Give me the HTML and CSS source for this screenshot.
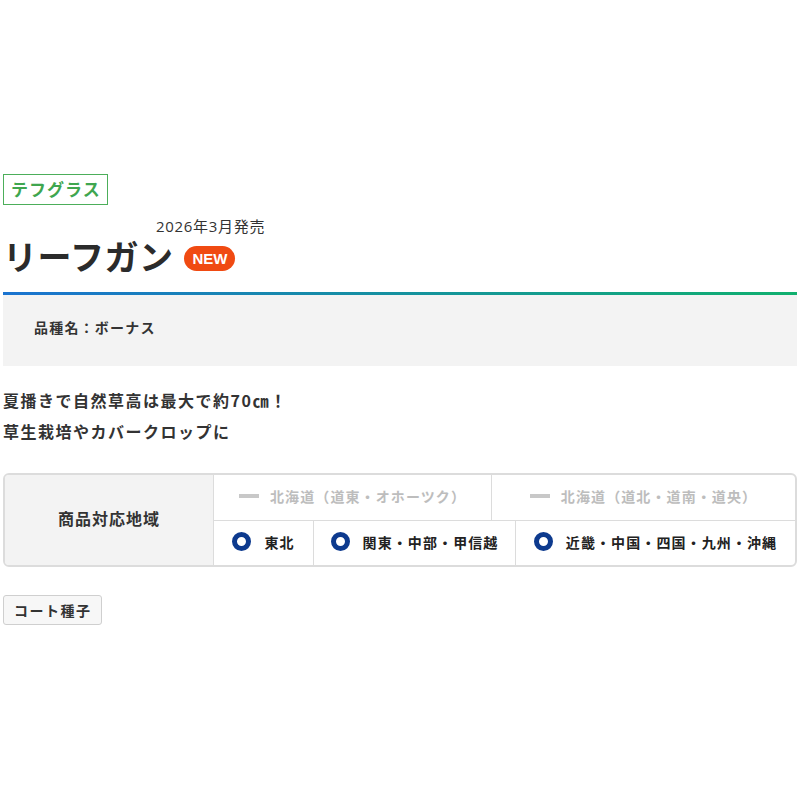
FILE: index.html
```html
<!DOCTYPE html>
<html lang="ja">
<head>
<meta charset="utf-8">
<link rel="stylesheet" href="styles.css">
</head>
<body>
<div class="wrap">
  <span class="tag">テフグラス</span>
  <div class="date">2026年3月発売</div>
  <div class="title-row">
    <h1 class="title">リーフガン</h1>
    <span class="badge">NEW</span>
  </div>
  <div class="rule"></div>
  <div class="variety">品種名：ボーナス</div>
  <p class="lead">夏播きで自然草高は最大で約70㎝！<br>草生栽培やカバークロップに</p>
  <div class="region">
    <div class="region-label">商品対応地域</div>
    <div class="region-body">
      <div class="region-row">
        <div class="cell off c1"><span class="dash"></span>北海道（道東・オホーツク）</div>
        <div class="cell off c2"><span class="dash"></span>北海道（道北・道南・道央）</div>
      </div>
      <div class="region-row">
        <div class="cell on c3"><span class="ring"></span>東北</div>
        <div class="cell on c4"><span class="ring"></span>関東・中部・甲信越</div>
        <div class="cell on c5"><span class="ring"></span>近畿・中国・四国・九州・沖縄</div>
      </div>
    </div>
  </div>
  <span class="btn">コート種子</span>
</div>
</body>
</html>
```
FILE: styles.css
```css
* { box-sizing: border-box; }
body {
  margin: 0;
  font-family: "Noto Sans CJK JP", "Noto Sans", sans-serif;
  color: #333;
  background: #fff;
}
.wrap {
  padding: 174px 3px 0;
}
.tag {
  display: inline-block;
  height: 31px;
  line-height: 28px;
  padding: 0 6px 0 7px;
  border: 1px solid #4cae5a;
  color: #3fa64f;
  font-size: 17px;
  font-weight: 700;
  letter-spacing: 1px;
}
.date {
  margin: 11px 0 0 153px;
  font-family: "Open Sans", "Noto Sans CJK JP", sans-serif;
  font-size: 15px;
  line-height: 20px;
  letter-spacing: 0.7px;
  color: #333;
}
.title-row {
  display: flex;
  align-items: center;
  gap: 11px;
  height: 40px;
}
.title {
  margin: 0;
  font-size: 34px;
  line-height: 40px;
  font-weight: 700;
  color: #2b2b2b;
  letter-spacing: 0.5px;
}
.badge {
  display: inline-block;
  height: 25px;
  line-height: 25px;
  padding: 0 8px;
  border-radius: 13px;
  background: #f04a12;
  color: #fff;
  font-family: "Liberation Sans", Arial, sans-serif;
  font-weight: 700;
  font-size: 15px;
  margin-top: 4px;
}
.rule {
  margin-top: 16px;
  height: 3px;
  background: linear-gradient(90deg, #1a73d0, #10b06e);
}
.variety {
  height: 71px;
  background: #f3f3f3;
  padding: 0 0 8px 31px;
  display: flex;
  align-items: center;
  font-size: 14px;
  font-weight: 700;
  letter-spacing: 1.2px;
  color: #333;
}
.lead {
  margin: 19px 0 0;
  font-size: 16px;
  font-weight: 700;
  line-height: 31px;
  letter-spacing: 1.5px;
  color: #333;
}
.region {
  margin-top: 26px;
  display: flex;
  border: 2px solid #dcdcdc;
  border-radius: 6px;
  overflow: hidden;
  height: 94px;
}
.region-label {
  width: 209px;
  background: #f3f3f3;
  border-right: 1px solid #dcdcdc;
  display: flex;
  align-items: center;
  justify-content: center;
  padding-bottom: 4px;
  font-size: 16px;
  font-weight: 700;
  letter-spacing: 1px;
  color: #333;
}
.region-body {
  flex: 1;
  display: flex;
  flex-direction: column;
}
.region-row {
  flex: 1;
  display: flex;
}
.region-row + .region-row {
  border-top: 1px solid #dcdcdc;
}
.cell {
  display: flex;
  align-items: center;
  justify-content: center;
  padding-bottom: 2px;
  font-size: 14px;
  font-weight: 700;
  letter-spacing: 1.1px;
}
.cell + .cell {
  border-left: 1px solid #dcdcdc;
}
.c1 { width: 277px; }
.c2 { flex: 1; }
.c3 { width: 99px; }
.c4 { width: 202px; }
.c5 { flex: 1; }
.off { color: #bdbdbd; }
.on { color: #222; }
.dash {
  width: 20px;
  height: 4px;
  background: #c8c8c8;
  margin-right: 11px;
}
.ring {
  width: 19px;
  height: 19px;
  border: 5px solid #0d3a8e;
  border-radius: 50%;
  margin-right: 13px;
}
.btn {
  display: inline-block;
  margin-top: 28px;
  height: 30px;
  line-height: 28px;
  padding: 0 9px 0 10px;
  border: 1px solid #cfcfcf;
  border-radius: 3px;
  background: #f7f7f7;
  font-size: 14px;
  font-weight: 700;
  letter-spacing: 1.5px;
  color: #333;
}
```
